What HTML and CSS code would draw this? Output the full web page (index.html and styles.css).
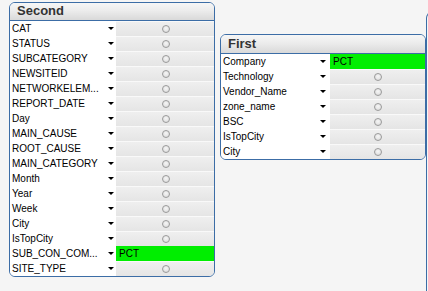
FILE: index.html
```html
<!DOCTYPE html>
<html>
<head>
<meta charset="utf-8">
<link rel="stylesheet" href="styles.css">
</head>
<body>
<div class="sheet">
  <div class="box second">
    <div class="hdr">Second</div>
    <div class="rows">
      <div class="row"><div class="lbl">CAT<i class="arr"></i></div><div class="val"><i class="dot"></i></div></div>
      <div class="row"><div class="lbl">STATUS<i class="arr"></i></div><div class="val"><i class="dot"></i></div></div>
      <div class="row"><div class="lbl">SUBCATEGORY<i class="arr"></i></div><div class="val"><i class="dot"></i></div></div>
      <div class="row"><div class="lbl">NEWSITEID<i class="arr"></i></div><div class="val"><i class="dot"></i></div></div>
      <div class="row"><div class="lbl">NETWORKELEM...<i class="arr"></i></div><div class="val"><i class="dot"></i></div></div>
      <div class="row"><div class="lbl">REPORT_DATE<i class="arr"></i></div><div class="val"><i class="dot"></i></div></div>
      <div class="row"><div class="lbl">Day<i class="arr"></i></div><div class="val"><i class="dot"></i></div></div>
      <div class="row"><div class="lbl">MAIN_CAUSE<i class="arr"></i></div><div class="val"><i class="dot"></i></div></div>
      <div class="row"><div class="lbl">ROOT_CAUSE<i class="arr"></i></div><div class="val"><i class="dot"></i></div></div>
      <div class="row"><div class="lbl">MAIN_CATEGORY<i class="arr"></i></div><div class="val"><i class="dot"></i></div></div>
      <div class="row"><div class="lbl">Month<i class="arr"></i></div><div class="val"><i class="dot"></i></div></div>
      <div class="row"><div class="lbl">Year<i class="arr"></i></div><div class="val"><i class="dot"></i></div></div>
      <div class="row"><div class="lbl">Week<i class="arr"></i></div><div class="val"><i class="dot"></i></div></div>
      <div class="row"><div class="lbl">City<i class="arr"></i></div><div class="val"><i class="dot"></i></div></div>
      <div class="row"><div class="lbl">IsTopCity<i class="arr"></i></div><div class="val"><i class="dot"></i></div></div>
      <div class="row"><div class="lbl">SUB_CON_COM...<i class="arr"></i></div><div class="val sel">PCT</div></div>
      <div class="row"><div class="lbl">SITE_TYPE<i class="arr"></i></div><div class="val"><i class="dot"></i></div></div>
    </div>
  </div>

  <div class="box first">
    <div class="hdr">First</div>
    <div class="rows">
      <div class="row"><div class="lbl">Company<i class="arr"></i></div><div class="val sel">PCT</div></div>
      <div class="row"><div class="lbl">Technology<i class="arr"></i></div><div class="val"><i class="dot"></i></div></div>
      <div class="row"><div class="lbl">Vendor_Name<i class="arr"></i></div><div class="val"><i class="dot"></i></div></div>
      <div class="row"><div class="lbl">zone_name<i class="arr"></i></div><div class="val"><i class="dot"></i></div></div>
      <div class="row"><div class="lbl">BSC<i class="arr"></i></div><div class="val"><i class="dot"></i></div></div>
      <div class="row"><div class="lbl">IsTopCity<i class="arr"></i></div><div class="val"><i class="dot"></i></div></div>
      <div class="row"><div class="lbl">City<i class="arr"></i></div><div class="val"><i class="dot"></i></div></div>
    </div>
  </div>

  <div class="edge"></div>
</div>
</body>
</html>
```

FILE: styles.css
```css
html, body {
  margin: 0;
  padding: 0;
  background: #f5f5f5;
}
.sheet {
  position: relative;
  width: 428px;
  height: 291px;
  overflow: hidden;
  font-family: "Liberation Sans", Arial, sans-serif;
  font-size: 10px;
  color: #000;
}
.box {
  position: absolute;
  box-sizing: border-box;
  border: 1px solid #3c6da6;
  border-radius: 6px;
  background: #fff;
  overflow: hidden;
  display: flex;
  flex-direction: column;
}
.second {
  left: 9px;
  top: 2px;
  width: 206px;
  height: 275px;
}
.first {
  left: 220px;
  top: 34px;
  width: 206px;
  height: 126px;
}
.hdr {
  box-sizing: border-box;
  height: 18px;
  border-bottom: 1px solid #3c6da6;
  background: linear-gradient(#f6f6f6 0%, #ececec 45%, #d9d9d9 100%);
  font-weight: bold;
  font-size: 13px;
  color: #333;
  padding-left: 7px;
  line-height: 16px;
}
.first .hdr {
  height: 19px;
  line-height: 18px;
}
.rows {
  display: flex;
  flex-direction: column;
}
.row {
  display: flex;
  height: 15px;
}
.lbl {
  position: relative;
  box-sizing: border-box;
  width: 106px;
  padding-left: 2px;
  line-height: 15px;
  white-space: nowrap;
  background: #fff;
}
.first .lbl {
  width: 109px;
}
.arr {
  position: absolute;
  left: 98px;
  top: 6px;
  width: 0;
  height: 0;
  border-top: 3px solid #000;
  border-left: 3px solid transparent;
  border-right: 3px solid transparent;
}
.first .arr {
  left: 99px;
}
.val {
  flex: 1;
  display: flex;
  align-items: center;
  justify-content: center;
  box-sizing: border-box;
  border-top: 1px solid #f9f9f9;
  background: linear-gradient(#efefef, #e5e5e5);
}
.val.sel {
  justify-content: flex-start;
  padding-left: 3px;
  border-top: none;
  background: #00ee00;
  line-height: 15px;
}
.dot {
  display: block;
  box-sizing: border-box;
  width: 8px;
  height: 8px;
  margin-left: 1px;
  border-radius: 50%;
  border: 1px solid #9a9a9a;
  background: radial-gradient(circle at 50% 40%, #f6f6f6 0%, #d8d8d8 100%);
}
.edge {
  position: absolute;
  left: 426px;
  top: 12px;
  width: 20px;
  height: 300px;
  box-sizing: border-box;
  border-left: 1px solid #3c6da6;
  border-top: 1px solid #3c6da6;
  border-top-left-radius: 6px;
}
```
